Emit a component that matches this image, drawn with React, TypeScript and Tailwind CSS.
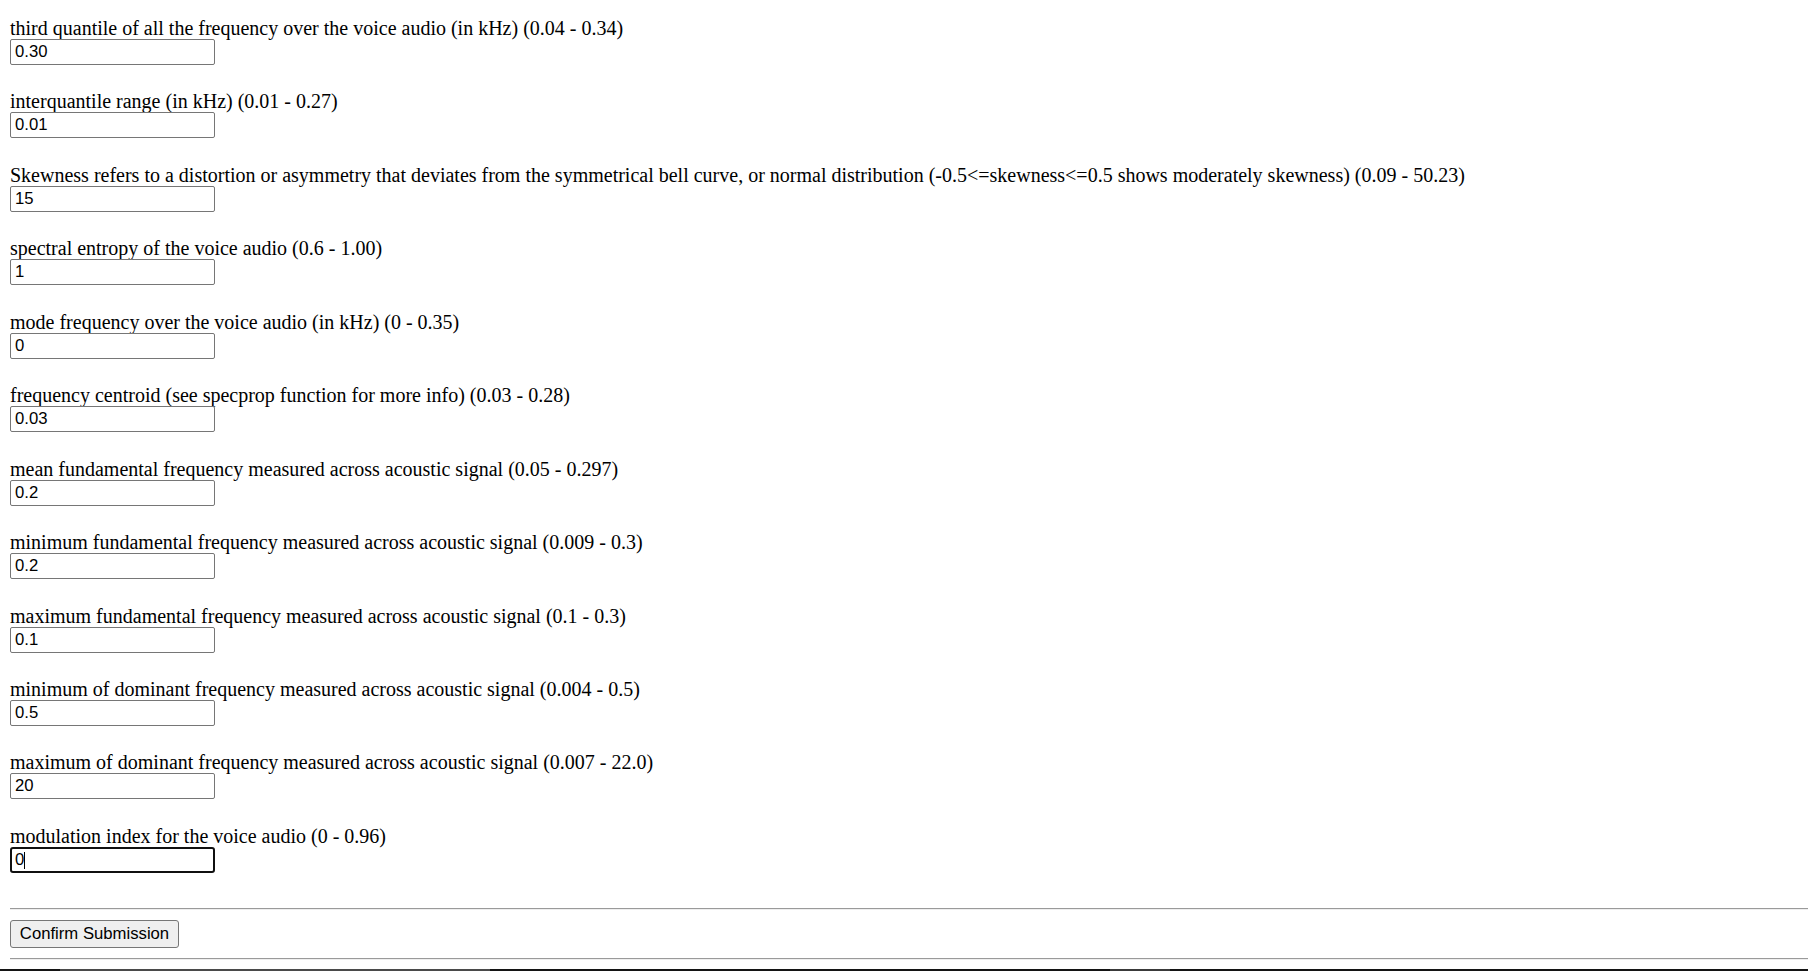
import { useState } from "react";

const FIELDS: { label: string; value: string }[] = [
  { label: "third quantile of all the frequency over the voice audio (in kHz) (0.04 - 0.34)", value: "0.30" },
  { label: "interquantile range (in kHz) (0.01 - 0.27)", value: "0.01" },
  {
    label:
      "Skewness refers to a distortion or asymmetry that deviates from the symmetrical bell curve, or normal distribution (-0.5<=skewness<=0.5 shows moderately skewness) (0.09 - 50.23)",
    value: "15",
  },
  { label: "spectral entropy of the voice audio (0.6 - 1.00)", value: "1" },
  { label: "mode frequency over the voice audio (in kHz) (0 - 0.35)", value: "0" },
  { label: "frequency centroid (see specprop function for more info) (0.03 - 0.28)", value: "0.03" },
  { label: "mean fundamental frequency measured across acoustic signal (0.05 - 0.297)", value: "0.2" },
  { label: "minimum fundamental frequency measured across acoustic signal (0.009 - 0.3)", value: "0.2" },
  { label: "maximum fundamental frequency measured across acoustic signal (0.1 - 0.3)", value: "0.1" },
  { label: "minimum of dominant frequency measured across acoustic signal (0.004 - 0.5)", value: "0.5" },
  { label: "maximum of dominant frequency measured across acoustic signal (0.007 - 22.0)", value: "20" },
  { label: "modulation index for the voice audio (0 - 0.96)", value: "0" },
];

function Field({ label, value, active }: { label: string; value: string; active: boolean }) {
  const [v, setV] = useState(value);
  return (
    <div className="mb-[25.45px]">
      <div className="h-[22px] leading-[22px] text-[20px] text-black whitespace-nowrap font-['Liberation_Serif',serif]">
        {label}
      </div>
      <div className="relative w-[205px] h-[26px]">
        <input
          type="text"
          value={v}
          onChange={(e) => setV(e.target.value)}
          className={`block w-full h-full bg-white text-[16.7px] text-black outline-none font-['Liberation_Sans',Arial,sans-serif] ${
            active
              ? "border-2 border-[#101010] rounded-[3px] px-[3px]"
              : "border border-[#767676] rounded-[2px] px-[4px]"
          }`}
        />
        {active && <span className="absolute left-[14px] top-[5px] w-px h-[17px] bg-black" />}
      </div>
    </div>
  );
}

export default function App() {
  return (
    <div className="h-[971px] overflow-hidden flex flex-col bg-white">
      <form className="pl-[10px] pt-[17px]" onSubmit={(e) => e.preventDefault()}>
        {FIELDS.map((f, i) => (
          <Field key={i} label={f.label} value={f.value} active={i === FIELDS.length - 1} />
        ))}
        <div className="mt-[35px] border-t border-[#9a9a9a] border-b border-b-[#eeeeee]" />
        <button
          type="submit"
          className="mt-[10px] w-[169px] h-[28px] bg-[#efefef] border border-[#767676] rounded-[3px] text-[16.7px] text-black font-['Liberation_Sans',Arial,sans-serif]"
        >
          Confirm Submission
        </button>
        <div className="mt-[10px] border-t border-[#9a9a9a] border-b border-b-[#eeeeee]" />
      </form>
      <div className="mt-auto h-[2px] flex bg-[#141414]">
        <div className="w-[60px]" />
        <div className="w-[430px] bg-[#4a4a4a]" />
        <div className="w-[620px]" />
        <div className="w-[60px] bg-[#3a3a3a]" />
      </div>
    </div>
  );
}
